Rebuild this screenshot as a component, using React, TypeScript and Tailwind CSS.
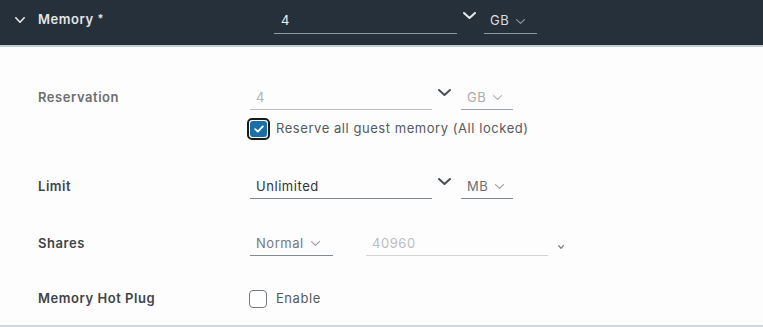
import React from "react";

const font = { fontFamily: "Inter, 'Noto Sans', sans-serif", letterSpacing: "0.55px" };

function Chev({ w, h, color, sw = 1.6 }: { w: number; h: number; color: string; sw?: number }) {
  return (
    <svg width={w} height={h} viewBox={`0 0 ${w} ${h}`} fill="none">
      <polyline
        points={`${sw / 2},${sw / 2} ${w / 2},${h - sw / 2} ${w - sw / 2},${sw / 2}`}
        stroke={color}
        strokeWidth={sw}
        strokeLinecap="round"
        strokeLinejoin="round"
      />
    </svg>
  );
}

export default function App() {
  return (
    <div className="w-[763px] h-[327px] bg-white overflow-hidden text-[13px]" style={font}>
      {/* header */}
      <div className="h-[47px] bg-[#25303a] border-b-[2px] border-[#c3ccd3] flex items-start">
        <div className="w-[38px] pl-[15px] pt-[17px] flex">
          <Chev w={10} h={6} color="#e6e9ec" sw={1.6} />
        </div>
        <div className="w-[236px] pt-[10px] text-[#e4e6e8] font-semibold">
          Memory <span className="text-[11px] align-top">*</span>
        </div>
        <div className="flex items-start pt-[9px] h-full">
          <div className="w-[183px] h-[25px] border-b border-[#8d9aa5] flex items-center pl-[7px] text-[#f0f2f4]">4</div>
          <div className="ml-[6px] mt-[3px]">
            <Chev w={13} h={7} color="#e6e9ec" sw={2} />
          </div>
          <div className="ml-[8px] w-[53px] h-[25px] border-b border-[#8d9aa5] flex items-center pl-[6px] gap-[7px] text-[#d8dde1]">
            <span>GB</span>
            <Chev w={9} h={5} color="#8f9ba5" sw={1.1} />
          </div>
        </div>
      </div>

      {/* content */}
      <div className="pt-[39px] bg-[#fdfdfd]">
        {/* Reservation */}
        <div className="flex items-start h-[24px]">
          <div className="w-[250px] pl-[38px] h-full flex items-center font-semibold text-[#6e6e6e]">Reservation</div>
          <div className="w-[182px] h-[24px] border-b border-[#bcbfc2] flex items-center pl-[6px] text-[#b3b3b3]">4</div>
          <div className="ml-[6px] mt-[3px]">
            <Chev w={13} h={7} color="#4a4f54" sw={2} />
          </div>
          <div className="ml-[10px] w-[52px] h-[24px] border-b border-[#9aa2a9] flex items-center pl-[6px] gap-[7px] text-[#acacac]">
            <span>GB</span>
            <Chev w={9} h={5} color="#b0b0b0" sw={1.1} />
          </div>
        </div>
        {/* Reserve all checkbox */}
        <div className="flex items-center h-[22px] mt-[8px]">
          <div className="w-[247px]" />
          <div className="w-[23px] h-[22px] rounded-[5px] border-2 border-[#1b1b1b] p-[1px] flex">
            <div className="flex-1 rounded-[3px] bg-[#1a6fa8] flex items-center justify-center">
              <svg width="10" height="8" viewBox="0 0 10 8" fill="none">
                <polyline points="1.2,4.2 3.8,6.6 8.8,1.4" stroke="white" strokeWidth="1.8" strokeLinecap="round" strokeLinejoin="round" />
              </svg>
            </div>
          </div>
          <div className="ml-[6px] text-[#555a5e]">Reserve all guest memory (All locked)</div>
        </div>
        {/* Limit */}
        <div className="flex items-start h-[24px] mt-[35px]">
          <div className="w-[250px] pl-[38px] h-full flex items-center font-semibold text-[#3f4448]">Limit</div>
          <div className="w-[182px] h-[24px] border-b border-[#7f8a93] flex items-center pl-[6px] text-[#2f3336]">Unlimited</div>
          <div className="ml-[6px] mt-[3px]">
            <Chev w={13} h={7} color="#4a4f54" sw={2} />
          </div>
          <div className="ml-[10px] w-[52px] h-[24px] border-b border-[#7f8a93] flex items-center pl-[6px] gap-[7px] text-[#6b6f73]">
            <span>MB</span>
            <Chev w={9} h={5} color="#9aa0a5" sw={1.1} />
          </div>
        </div>
        {/* Shares */}
        <div className="flex items-start h-[24px] mt-[33px]">
          <div className="w-[250px] pl-[38px] h-full flex items-center font-semibold text-[#3f4448]">Shares</div>
          <div className="w-[83px] h-[24px] border-b border-[#7f8a93] flex items-center pl-[6px] gap-[7px] text-[#74797d]">
            <span>Normal</span>
            <Chev w={9} h={5} color="#9aa0a5" sw={1.1} />
          </div>
          <div className="ml-[33px] w-[182px] h-[24px] border-b border-[#cfd3d6] flex items-center pl-[6px] text-[#bdbdbd]">40960</div>
          <div className="ml-[10px] mt-[13px]">
            <Chev w={6} h={4} color="#7a7f83" sw={1.3} />
          </div>
        </div>
        {/* Memory Hot Plug */}
        <div className="flex items-center h-[24px] mt-[31px]">
          <div className="w-[249px] pl-[38px] font-semibold text-[#3f4448]">Memory Hot Plug</div>
          <div className="w-[18px] h-[18px] rounded-[4px] border border-[#737a80] bg-white" />
          <div className="ml-[9px] text-[#555a5e]">Enable</div>
        </div>
        <div className="mt-[14px] h-[2px] bg-[#d0d7dd]" />
      </div>
    </div>
  );
}
